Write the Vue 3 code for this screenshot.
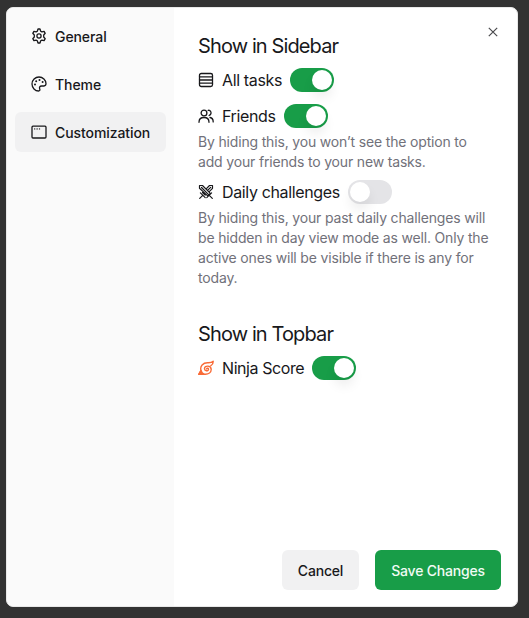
<script setup>
import { reactive, ref } from 'vue'

const active = ref('Customization')
const tabs = ['General', 'Theme', 'Customization']

const settings = reactive({ tasks: true, friends: true, daily: false, ninja: true })
</script>

<template>
  <div class="backdrop">
    <div class="dialog" role="dialog">
      <nav class="sidebar">
        <button
          v-for="tab in tabs"
          :key="tab"
          class="tab"
          :class="{ active: tab === active }"
          @click="active = tab"
        >
          <svg v-if="tab === 'General'" class="icon" viewBox="0 0 16 16">
            <path d="M6.300 3.200 7 1h2l.7 2.200 1.200.7 2.200-.5 1.100 1.900L12.700 7v2l1.500 1.700-1.100 1.900-2.200-.5-1.200.7L9 15H7l-.7-2.200-1.200-.7-2.200.5-1.100-1.900L3.300 9V7L1.800 5.300l1.100-1.900 2.200.5z" />
            <circle cx="8" cy="8" r="2.100" />
          </svg>
          <svg v-else-if="tab === 'Theme'" class="icon" viewBox="0 0 16 16">
            <path d="M15 7.600C15 3.900 11.800 1 8 1S1 4.100 1 8s3.100 7 6.600 7c1.100 0 1.500-.8 1.200-1.700-.9-2.200.1-3.300 1.800-3.300H13c1.300 0 2-.9 2-2.400Z" />
            <g class="dots">
              <circle cx="4" cy="8.500" r="1" /><circle cx="5.200" cy="5.200" r="1" />
              <circle cx="8.500" cy="4" r="1" /><circle cx="11.600" cy="6" r="1" />
            </g>
          </svg>
          <svg v-else class="icon" viewBox="0 0 16 16">
            <rect x="1" y="2.200" width="14" height="11.800" rx="1" />
            <g class="dots">
              <circle cx="3.700" cy="4.900" r=".7" /><circle cx="6.100" cy="4.900" r=".7" /><circle cx="8.500" cy="4.900" r=".7" />
            </g>
          </svg>
          <span>{{ tab }}</span>
        </button>
      </nav>

      <main class="content">
        <button class="close" aria-label="Close">
          <svg viewBox="0 0 10 10"><path d="m.8.8 8.400 8.400M9.200.8.8 9.200" /></svg>
        </button>

        <section>
          <h2>Show in Sidebar</h2>
          <div class="row">
            <svg class="icon" viewBox="0 0 16 16">
              <rect x="1.500" y="1.500" width="13" height="13" rx="1.800" />
              <path d="M1.500 4.900h13M1.500 8h13M1.500 11.200h13" />
            </svg>
            <span class="label">All tasks</span>
            <button class="switch" :class="{ on: settings.tasks }" @click="settings.tasks = !settings.tasks"><i /></button>
          </div>
          <div class="row">
            <svg class="icon" viewBox="0 0 16 16">
              <circle cx="6" cy="5" r="2.900" />
              <path d="M1 14.300c0-3 1.900-4.800 5-4.800s5 1.800 5 4.800M10.200 2.300c2.300-.4 3.500 2.200 2.500 3.900-.4.700-.9 1-1.600 1.300M12 9.500c2.100.4 3.200 2 3.200 4.400" />
            </svg>
            <span class="label">Friends</span>
            <button class="switch" :class="{ on: settings.friends }" @click="settings.friends = !settings.friends"><i /></button>
          </div>
          <p>By hiding this, you won’t see the option to add your friends to your new tasks.</p>
          <div class="row">
            <svg class="icon swords" viewBox="0 0 16 16">
              <path d="M1.500 1.500h3l7.800 7.800-2.600 2.600-8.200-7.600zM3.500 3.500l6.800 6.800M14.500 1.500h-3L8.700 4.300M14.500 1.500v2.800l-3 3M12.700 3.300l-2.600 2.600M4.500 8.500l2.700 2.700M2.400 8.800l4.800 4.800M13.600 8.800l-4.800 4.800M11.800 11.800l2.500 2.500M4.200 11.800l-2.500 2.500" />
            </svg>
            <span class="label">Daily challenges</span>
            <button class="switch" :class="{ on: settings.daily }" @click="settings.daily = !settings.daily"><i /></button>
          </div>
          <p>By hiding this, your past daily challenges will be hidden in day view mode as well. Only the active ones will be visible if there is any for today.</p>
        </section>

        <section class="topbar">
          <h2>Show in Topbar</h2>
          <div class="row">
            <svg class="icon leaf" viewBox="0 0 16 16">
              <path class="tail" d="M3 10.500.8 14.300h5.400C4.500 13.500 3.400 12.200 3 10.500Z" />
              <path d="M8.600 8.900c.1-1.100 2.100-.8 1.900.6-.3 2-4.100 1.700-4-.9.100-3.400 6.600-3.400 6.700.9 0 2.900-2.700 4.800-5.900 4.800H.8l2.200-3.900C1.700 6.200 5 2.600 9.700 2.700c2.400.1 4.400-.4 5.500-1.500.1 2.100-.7 3.600-2.300 4.500" />
            </svg>
            <span class="label ninja">Ninja Score</span>
            <button class="switch" :class="{ on: settings.ninja }" @click="settings.ninja = !settings.ninja"><i /></button>
          </div>
        </section>

        <footer>
          <button class="btn cancel">Cancel</button>
          <button class="btn save">Save Changes</button>
        </footer>
      </main>
    </div>
  </div>
</template>

<style>
body { background: #323232; }
</style>

<style scoped>
* { box-sizing: border-box; }
button { border: 0; padding: 0; font: inherit; color: inherit; background: none; }
.backdrop {
  height: 618px;
  padding: 7px 11px 11px 6px;
  background: #323232;
  font-family: Inter, sans-serif;
  color: #18181b;
}
.dialog {
  display: flex;
  height: 600px;
  overflow: hidden;
  border: 1px solid #e8e8e8;
  border-radius: 7px;
  background: #fff;
}
.sidebar {
  flex: 0 0 166px;
  display: flex;
  flex-direction: column;
  gap: 8px;
  padding: 8px;
  background: #fafafa;
}
.tab {
  display: flex;
  flex: none;
  align-items: center;
  gap: 8px;
  width: 151px;
  height: 40px;
  padding-left: 16px;
  border-radius: 6px;
  font-size: 14px;
  font-weight: 550;
  letter-spacing: -0.08px;
}
.tab.active { background: #f1f1f2; }
.icon {
  flex: none;
  width: 16px;
  height: 16px;
  fill: none;
  stroke: currentColor;
  stroke-width: 1.3;
  stroke-linejoin: round;
  stroke-linecap: round;
}
.icon.swords { stroke-width: 1.2; }
.icon.leaf { color: #f96b37; stroke-width: 1.4; }
.tail { fill: currentColor; }
.dots { fill: currentColor; stroke: none; }
.content {
  position: relative;
  flex: 1;
  display: flex;
  flex-direction: column;
  padding: 24px 16px 16px 24px;
}
.close {
  position: absolute;
  top: 19px;
  right: 19px;
  width: 10px;
  height: 10px;
}
.close svg { display: block; fill: none; stroke: #4b4b4e; stroke-width: 1.2; }
h2 { margin: 0; font-size: 20px; line-height: 28px; font-weight: 430; letter-spacing: -0.88px; white-space: nowrap; }
.row { display: flex; align-items: center; gap: 8px; height: 24px; margin-top: 12px; }
h2 + .row, p + .row { margin-top: 8px; }
.label { font-size: 16px; line-height: 24px; font-weight: 430; letter-spacing: -0.36px; white-space: nowrap; }
.label.ninja { letter-spacing: -0.42px; }
p { margin: 4px 0 0; width: 294px; font-size: 14px; line-height: 20px; font-weight: 430; letter-spacing: -0.17px; color: #71717a; }
.switch {
  flex: none;
  display: flex;
  width: 44px;
  height: 24px;
  padding: 2px;
  border-radius: 12px;
  background: #e4e4e7;
}
.switch.on { justify-content: flex-end; background: #189d48; }
.switch i { width: 20px; height: 20px; border-radius: 50%; background: #fff; box-shadow: 0 8px 12px rgb(0 0 0 / 7%); }
.topbar { margin-top: 32px; }
footer { display: flex; justify-content: flex-end; gap: 16px; margin-top: auto; }
.btn { height: 40px; border-radius: 6px; font-size: 14px; font-weight: 550; letter-spacing: -0.2px; white-space: nowrap; }
.cancel { width: 77px; background: #f1f1f2; }
.save { width: 126px; background: #189d48; color: #f1fbf4; }
</style>
